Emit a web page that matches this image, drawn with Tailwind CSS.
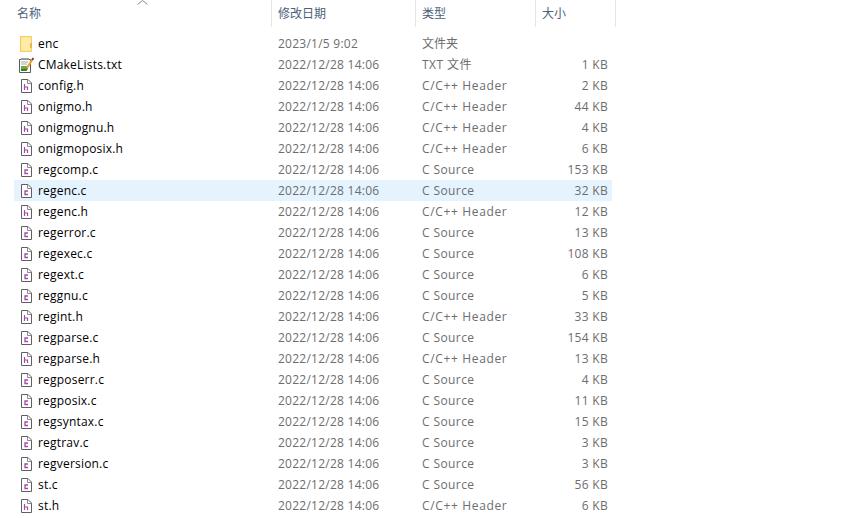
<!DOCTYPE html>
<html lang="zh-CN">
<head>
    <meta charset="UTF-8">
    <title>onigmo</title>
    <script src="https://cdn.jsdelivr.net/npm/@tailwindcss/browser@4"></script>
</head>
<body class="bg-white overflow-hidden font-['Open_Sans','Noto_Sans_CJK_SC',sans-serif] text-[12px] leading-[21px] text-[#6d6d6d]">
    <svg class="hidden">
        <symbol id="file" viewBox="0 0 16 16">
            <path d="M3.5 1.5H10L13.5 5V14.5H3.5Z" fill="#fff" stroke="#5f5f63"/>
            <path d="M9.5 1.5V5.5H13.5" fill="none" stroke="#8a8a8e"/>
        </symbol>
        <symbol id="hfile" viewBox="0 0 16 16">
            <use href="#file"/>
            <path d="M6.5 6V12M6.5 9H9.5V12" fill="none" stroke="#a24ba6" stroke-width="1.2"/>
        </symbol>
        <symbol id="cfile" viewBox="0 0 16 16">
            <use href="#file"/>
            <path d="M10 8H7V11.5H10" fill="none" stroke="#a24ba6" stroke-width="1.3"/>
        </symbol>
        <symbol id="folder" viewBox="0 0 16 16">
            <path d="M2.5 0.5H13.5V15.5H2.5Z" fill="#fde592" stroke="#f3cf63"/>
            <path d="M4 2H13V14H4Z" fill="#ffecaa"/>
            <path d="M12 7H14V12H12Z" fill="#e8b948"/>
        </symbol>
        <symbol id="txt" viewBox="0 0 16 16">
            <path d="M1.5 2.5H12.5V15.5H1.5Z" fill="#fff" stroke="#55585c"/>
            <path d="M3 1H11V3H3Z" fill="#9a9a9a"/>
            <path d="M3 5H10M3 7H9" stroke="#a8a8a8"/>
            <path d="M3 9H9V14H3Z" fill="#6bab3c"/>
            <path d="M3 12H8V14H3Z" fill="#2e7d32"/>
            <path d="M9 11L14 3" stroke="#e8a52c" stroke-width="2.2"/>
            <path d="M14 3L15.5 1" stroke="#8c2f22" stroke-width="2"/>
            <path d="M9 11L8 13.5L10 12Z" fill="#3b3b3b"/>
        </symbol>
    </svg>

    <!-- header -->
    <div class="relative flex h-[27px] text-[#4c607a] leading-[28px]">
        <div class="w-[272px] pl-[17px] border-r border-[#e5e5e5]">名称</div>
        <div class="w-[144px] pl-[6px] border-r border-[#e5e5e5]">修改日期</div>
        <div class="w-[120px] pl-[6px] border-r border-[#e5e5e5]">类型</div>
        <div class="w-[80px] pl-[6px] border-r border-[#e5e5e5]">大小</div>
        <svg class="absolute left-[137px] top-0 w-[11px] h-[5px]" viewBox="0 0 11 5"><path d="M0.5 4.5L5.5 0.5L10.5 4.5" fill="none" stroke="#8a8a8a"/></svg>
    </div>

    <!-- file rows -->
    <div class="mt-[6px] ml-[14px] w-[598px]">
        <div class="grid grid-cols-[257px_144px_120px_77px] h-[21px]"><div class="flex items-center gap-1 pl-1 text-black tracking-[0.2px]"><svg class="w-4 h-4 shrink-0"><use href="#folder"/></svg>enc</div><div class="pl-[7px] tracking-[0.25px]">2023/1/5 9:02</div><div class="pl-[7px]">文件夹</div><div></div></div>
        <div class="grid grid-cols-[257px_144px_120px_77px] h-[21px]"><div class="flex items-center gap-1 pl-1 text-black tracking-[0.2px]"><svg class="w-4 h-4 shrink-0"><use href="#txt"/></svg>CMakeLists.txt</div><div class="pl-[7px] tracking-[0.25px]">2022/12/28 14:06</div><div class="pl-[7px] tracking-[0.45px]">TXT 文件</div><div class="pr-1 text-right tracking-[0.3px]">1 KB</div></div>
        <div class="grid grid-cols-[257px_144px_120px_77px] h-[21px]"><div class="flex items-center gap-1 pl-1 text-black tracking-[0.2px]"><svg class="w-4 h-4 shrink-0"><use href="#hfile"/></svg>config.h</div><div class="pl-[7px] tracking-[0.25px]">2022/12/28 14:06</div><div class="pl-[7px] tracking-[0.65px]">C/C++ Header</div><div class="pr-1 text-right tracking-[0.3px]">2 KB</div></div>
        <div class="grid grid-cols-[257px_144px_120px_77px] h-[21px]"><div class="flex items-center gap-1 pl-1 text-black tracking-[0.2px]"><svg class="w-4 h-4 shrink-0"><use href="#hfile"/></svg>onigmo.h</div><div class="pl-[7px] tracking-[0.25px]">2022/12/28 14:06</div><div class="pl-[7px] tracking-[0.65px]">C/C++ Header</div><div class="pr-1 text-right tracking-[0.3px]">44 KB</div></div>
        <div class="grid grid-cols-[257px_144px_120px_77px] h-[21px]"><div class="flex items-center gap-1 pl-1 text-black tracking-[0.2px]"><svg class="w-4 h-4 shrink-0"><use href="#hfile"/></svg>onigmognu.h</div><div class="pl-[7px] tracking-[0.25px]">2022/12/28 14:06</div><div class="pl-[7px] tracking-[0.65px]">C/C++ Header</div><div class="pr-1 text-right tracking-[0.3px]">4 KB</div></div>
        <div class="grid grid-cols-[257px_144px_120px_77px] h-[21px]"><div class="flex items-center gap-1 pl-1 text-black tracking-[0.2px]"><svg class="w-4 h-4 shrink-0"><use href="#hfile"/></svg>onigmoposix.h</div><div class="pl-[7px] tracking-[0.25px]">2022/12/28 14:06</div><div class="pl-[7px] tracking-[0.65px]">C/C++ Header</div><div class="pr-1 text-right tracking-[0.3px]">6 KB</div></div>
        <div class="grid grid-cols-[257px_144px_120px_77px] h-[21px]"><div class="flex items-center gap-1 pl-1 text-black tracking-[0.2px]"><svg class="w-4 h-4 shrink-0"><use href="#cfile"/></svg>regcomp.c</div><div class="pl-[7px] tracking-[0.25px]">2022/12/28 14:06</div><div class="pl-[7px] tracking-[0.4px]">C Source</div><div class="pr-1 text-right tracking-[0.3px]">153 KB</div></div>
        <div class="grid grid-cols-[257px_144px_120px_77px] h-[21px] bg-[#e5f3ff]"><div class="flex items-center gap-1 pl-1 text-black tracking-[0.2px]"><svg class="w-4 h-4 shrink-0"><use href="#cfile"/></svg>regenc.c</div><div class="pl-[7px] tracking-[0.25px]">2022/12/28 14:06</div><div class="pl-[7px] tracking-[0.4px]">C Source</div><div class="pr-1 text-right tracking-[0.3px]">32 KB</div></div>
        <div class="grid grid-cols-[257px_144px_120px_77px] h-[21px]"><div class="flex items-center gap-1 pl-1 text-black tracking-[0.2px]"><svg class="w-4 h-4 shrink-0"><use href="#hfile"/></svg>regenc.h</div><div class="pl-[7px] tracking-[0.25px]">2022/12/28 14:06</div><div class="pl-[7px] tracking-[0.65px]">C/C++ Header</div><div class="pr-1 text-right tracking-[0.3px]">12 KB</div></div>
        <div class="grid grid-cols-[257px_144px_120px_77px] h-[21px]"><div class="flex items-center gap-1 pl-1 text-black tracking-[0.2px]"><svg class="w-4 h-4 shrink-0"><use href="#cfile"/></svg>regerror.c</div><div class="pl-[7px] tracking-[0.25px]">2022/12/28 14:06</div><div class="pl-[7px] tracking-[0.4px]">C Source</div><div class="pr-1 text-right tracking-[0.3px]">13 KB</div></div>
        <div class="grid grid-cols-[257px_144px_120px_77px] h-[21px]"><div class="flex items-center gap-1 pl-1 text-black tracking-[0.2px]"><svg class="w-4 h-4 shrink-0"><use href="#cfile"/></svg>regexec.c</div><div class="pl-[7px] tracking-[0.25px]">2022/12/28 14:06</div><div class="pl-[7px] tracking-[0.4px]">C Source</div><div class="pr-1 text-right tracking-[0.3px]">108 KB</div></div>
        <div class="grid grid-cols-[257px_144px_120px_77px] h-[21px]"><div class="flex items-center gap-1 pl-1 text-black tracking-[0.2px]"><svg class="w-4 h-4 shrink-0"><use href="#cfile"/></svg>regext.c</div><div class="pl-[7px] tracking-[0.25px]">2022/12/28 14:06</div><div class="pl-[7px] tracking-[0.4px]">C Source</div><div class="pr-1 text-right tracking-[0.3px]">6 KB</div></div>
        <div class="grid grid-cols-[257px_144px_120px_77px] h-[21px]"><div class="flex items-center gap-1 pl-1 text-black tracking-[0.2px]"><svg class="w-4 h-4 shrink-0"><use href="#cfile"/></svg>reggnu.c</div><div class="pl-[7px] tracking-[0.25px]">2022/12/28 14:06</div><div class="pl-[7px] tracking-[0.4px]">C Source</div><div class="pr-1 text-right tracking-[0.3px]">5 KB</div></div>
        <div class="grid grid-cols-[257px_144px_120px_77px] h-[21px]"><div class="flex items-center gap-1 pl-1 text-black tracking-[0.2px]"><svg class="w-4 h-4 shrink-0"><use href="#hfile"/></svg>regint.h</div><div class="pl-[7px] tracking-[0.25px]">2022/12/28 14:06</div><div class="pl-[7px] tracking-[0.65px]">C/C++ Header</div><div class="pr-1 text-right tracking-[0.3px]">33 KB</div></div>
        <div class="grid grid-cols-[257px_144px_120px_77px] h-[21px]"><div class="flex items-center gap-1 pl-1 text-black tracking-[0.2px]"><svg class="w-4 h-4 shrink-0"><use href="#cfile"/></svg>regparse.c</div><div class="pl-[7px] tracking-[0.25px]">2022/12/28 14:06</div><div class="pl-[7px] tracking-[0.4px]">C Source</div><div class="pr-1 text-right tracking-[0.3px]">154 KB</div></div>
        <div class="grid grid-cols-[257px_144px_120px_77px] h-[21px]"><div class="flex items-center gap-1 pl-1 text-black tracking-[0.2px]"><svg class="w-4 h-4 shrink-0"><use href="#hfile"/></svg>regparse.h</div><div class="pl-[7px] tracking-[0.25px]">2022/12/28 14:06</div><div class="pl-[7px] tracking-[0.65px]">C/C++ Header</div><div class="pr-1 text-right tracking-[0.3px]">13 KB</div></div>
        <div class="grid grid-cols-[257px_144px_120px_77px] h-[21px]"><div class="flex items-center gap-1 pl-1 text-black tracking-[0.2px]"><svg class="w-4 h-4 shrink-0"><use href="#cfile"/></svg>regposerr.c</div><div class="pl-[7px] tracking-[0.25px]">2022/12/28 14:06</div><div class="pl-[7px] tracking-[0.4px]">C Source</div><div class="pr-1 text-right tracking-[0.3px]">4 KB</div></div>
        <div class="grid grid-cols-[257px_144px_120px_77px] h-[21px]"><div class="flex items-center gap-1 pl-1 text-black tracking-[0.2px]"><svg class="w-4 h-4 shrink-0"><use href="#cfile"/></svg>regposix.c</div><div class="pl-[7px] tracking-[0.25px]">2022/12/28 14:06</div><div class="pl-[7px] tracking-[0.4px]">C Source</div><div class="pr-1 text-right tracking-[0.3px]">11 KB</div></div>
        <div class="grid grid-cols-[257px_144px_120px_77px] h-[21px]"><div class="flex items-center gap-1 pl-1 text-black tracking-[0.2px]"><svg class="w-4 h-4 shrink-0"><use href="#cfile"/></svg>regsyntax.c</div><div class="pl-[7px] tracking-[0.25px]">2022/12/28 14:06</div><div class="pl-[7px] tracking-[0.4px]">C Source</div><div class="pr-1 text-right tracking-[0.3px]">15 KB</div></div>
        <div class="grid grid-cols-[257px_144px_120px_77px] h-[21px]"><div class="flex items-center gap-1 pl-1 text-black tracking-[0.2px]"><svg class="w-4 h-4 shrink-0"><use href="#cfile"/></svg>regtrav.c</div><div class="pl-[7px] tracking-[0.25px]">2022/12/28 14:06</div><div class="pl-[7px] tracking-[0.4px]">C Source</div><div class="pr-1 text-right tracking-[0.3px]">3 KB</div></div>
        <div class="grid grid-cols-[257px_144px_120px_77px] h-[21px]"><div class="flex items-center gap-1 pl-1 text-black tracking-[0.2px]"><svg class="w-4 h-4 shrink-0"><use href="#cfile"/></svg>regversion.c</div><div class="pl-[7px] tracking-[0.25px]">2022/12/28 14:06</div><div class="pl-[7px] tracking-[0.4px]">C Source</div><div class="pr-1 text-right tracking-[0.3px]">3 KB</div></div>
        <div class="grid grid-cols-[257px_144px_120px_77px] h-[21px]"><div class="flex items-center gap-1 pl-1 text-black tracking-[0.2px]"><svg class="w-4 h-4 shrink-0"><use href="#cfile"/></svg>st.c</div><div class="pl-[7px] tracking-[0.25px]">2022/12/28 14:06</div><div class="pl-[7px] tracking-[0.4px]">C Source</div><div class="pr-1 text-right tracking-[0.3px]">56 KB</div></div>
        <div class="grid grid-cols-[257px_144px_120px_77px] h-[21px]"><div class="flex items-center gap-1 pl-1 text-black tracking-[0.2px]"><svg class="w-4 h-4 shrink-0"><use href="#hfile"/></svg>st.h</div><div class="pl-[7px] tracking-[0.25px]">2022/12/28 14:06</div><div class="pl-[7px] tracking-[0.65px]">C/C++ Header</div><div class="pr-1 text-right tracking-[0.3px]">6 KB</div></div>
    </div>
</body>
</html>
